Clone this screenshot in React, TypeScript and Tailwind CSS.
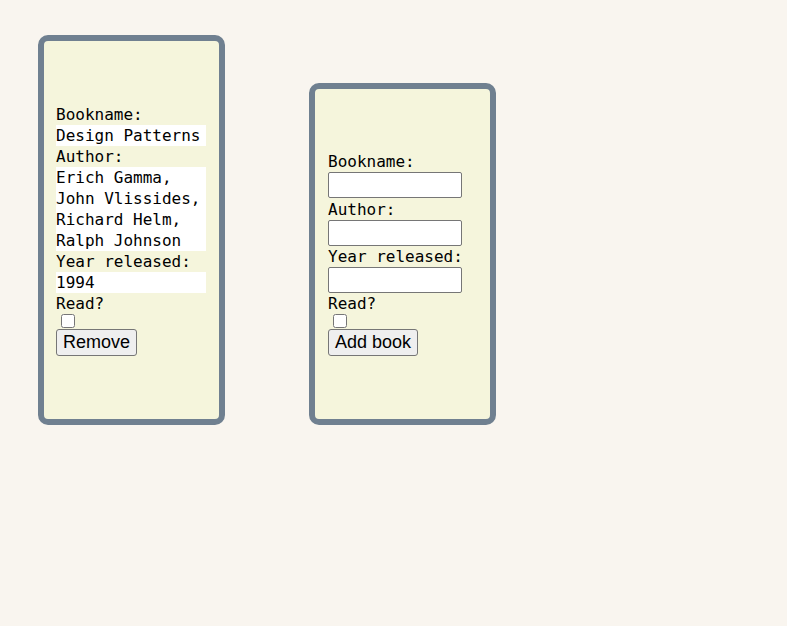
import { useState } from "react";

type Book = {
  name: string;
  authors: string[];
  year: string;
  read: boolean;
};

const mono = "font-['DejaVu_Sans_Mono',monospace] text-[16px] leading-[21px] text-black";
const btn =
  "h-[27px] bg-[#efefef] border border-[#767676] rounded-[3px] px-[6px] text-[18px] leading-[21px] text-black font-['Liberation_Sans',Arial,sans-serif] text-left";
const field = "w-[134px] h-[26px] bg-white border border-[#767676] rounded-[2px] px-1";

function BookCard({ book, onRemove }: { book: Book; onRemove: () => void }) {
  return (
    <div className="w-[187px] bg-[#f5f5dc] border-[6px] border-[#708090] rounded-[10px] pl-[12px] pr-[13px] pt-[63px] pb-[63px]">
      <div className={`flex flex-col items-start ${mono}`}>
        <span>Bookname:</span>
        <span className="w-[150px] bg-white whitespace-nowrap">{book.name}</span>
        <span>Author:</span>
        <span className="w-[150px] bg-white flex flex-col">
          {book.authors.map((a, i) => (
            <span key={i}>{a}{i < book.authors.length - 1 ? "," : ""}</span>
          ))}
        </span>
        <span>Year released:</span>
        <span className="w-[150px] bg-white">{book.year}</span>
        <span>Read?</span>
        <input type="checkbox" defaultChecked={book.read} className="ml-[5px] mb-px w-[14px] h-[14px]" />
        <button className={btn} onClick={onRemove}>Remove</button>
      </div>
    </div>
  );
}

function AddForm() {
  return (
    <div className="w-[187px] bg-[#f5f5dc] border-[6px] border-[#708090] rounded-[10px] pl-[13px] pr-[12px] pt-[62px] pb-[63px]">
      <form className={`flex flex-col items-start ${mono}`} onSubmit={(e) => e.preventDefault()}>
        <label>Bookname:</label>
        <input type="text" className={field} />
        <label className="mt-px">Author:</label>
        <input type="text" className={field} />
        <label>Year released:</label>
        <input type="text" className={field} />
        <label>Read?</label>
        <input type="checkbox" className="ml-[5px] mb-px w-[14px] h-[14px]" />
        <button type="submit" className={btn}>Add book</button>
      </form>
    </div>
  );
}

export default function App() {
  const [books, setBooks] = useState<Book[]>([
    {
      name: "Design Patterns",
      authors: ["Erich Gamma", "John Vlissides", "Richard Helm", "Ralph Johnson"],
      year: "1994",
      read: false,
    },
  ]);

  return (
    <div className="min-h-screen bg-[#f9f5ef] pl-[38px] pt-[35px]">
      <div className="flex items-end gap-[84px]">
        {books.map((b, i) => (
          <BookCard key={i} book={b} onRemove={() => setBooks(books.filter((_, j) => j !== i))} />
        ))}
        <AddForm />
      </div>
    </div>
  );
}
